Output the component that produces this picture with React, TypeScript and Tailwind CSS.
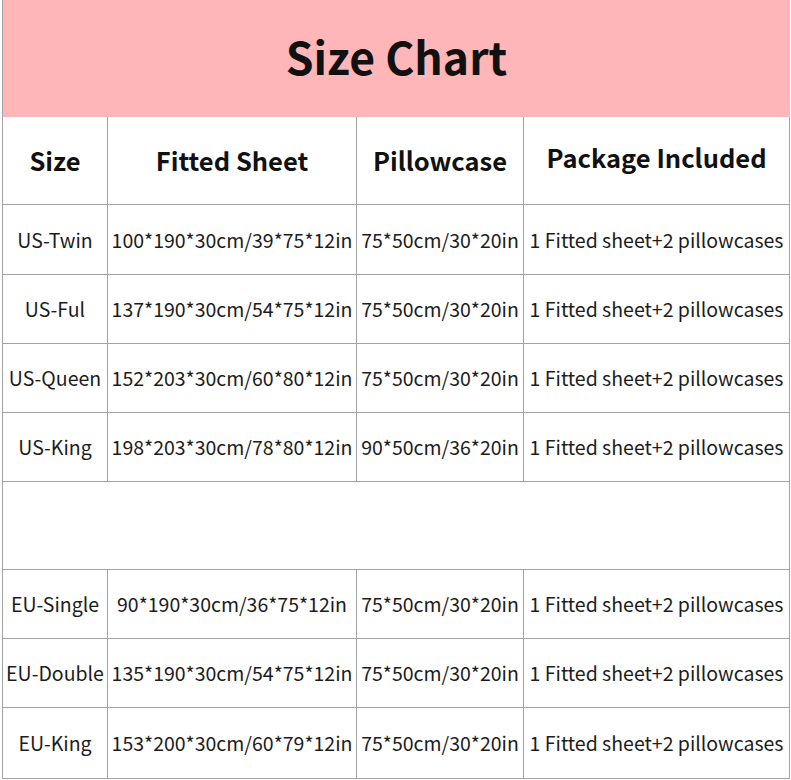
const ROWS: { size: string; fitted: string; pillow: string }[] = [
  { size: 'US-Twin', fitted: '100*190*30cm/39*75*12in', pillow: '75*50cm/30*20in' },
  { size: 'US-Ful', fitted: '137*190*30cm/54*75*12in', pillow: '75*50cm/30*20in' },
  { size: 'US-Queen', fitted: '152*203*30cm/60*80*12in', pillow: '75*50cm/30*20in' },
  { size: 'US-King', fitted: '198*203*30cm/78*80*12in', pillow: '90*50cm/36*20in' },
];

const EU_ROWS: { size: string; fitted: string; pillow: string }[] = [
  { size: 'EU-Single', fitted: '90*190*30cm/36*75*12in', pillow: '75*50cm/30*20in' },
  { size: 'EU-Double', fitted: '135*190*30cm/54*75*12in', pillow: '75*50cm/30*20in' },
  { size: 'EU-King', fitted: '153*200*30cm/60*79*12in', pillow: '75*50cm/30*20in' },
];

const PACKAGE = '1 Fitted sheet+2 pillowcases';

function Row({ size, fitted, pillow, h }: { size: string; fitted: string; pillow: string; h: string }) {
  return (
    <div className={`grid grid-cols-[105px_249px_167px_266px] border-b border-[#a3a3a3] text-[19.5px] text-[#1c1c1c] ${h}`}>
      <div className="flex items-center justify-center border-r border-[#a3a3a3] whitespace-nowrap">{size}</div>
      <div className="flex items-center justify-center border-r border-[#a3a3a3] whitespace-nowrap">{fitted}</div>
      <div className="flex items-center justify-center border-r border-[#a3a3a3] whitespace-nowrap">{pillow}</div>
      <div className="flex items-center justify-center border-r border-[#a3a3a3] whitespace-nowrap">{PACKAGE}</div>
    </div>
  );
}

export default function App() {
  return (
    <div
      className="w-[791px] h-[780px] bg-white pl-[2px]"
      style={{ fontFamily: '"Noto Sans CJK SC", "Noto Sans", sans-serif' }}
    >
      <div className="w-[788px] border-l border-[#a3a3a3]">
        <div className="h-[117px] bg-[#ffb6b8] flex items-center justify-center">
          <h1 className="text-[44.5px] font-bold text-[#111] leading-none -mt-[4px]">Size Chart</h1>
        </div>

        <div className="grid grid-cols-[105px_249px_167px_266px] h-[88px] border-b border-[#a3a3a3] text-[25.5px] font-bold text-[#111]">
          <div className="flex items-center justify-center border-r border-[#a3a3a3]">Size</div>
          <div className="flex items-center justify-center border-r border-[#a3a3a3]">Fitted Sheet</div>
          <div className="flex items-center justify-center border-r border-[#a3a3a3]">Pillowcase</div>
          <div className="flex items-center justify-center border-r border-[#a3a3a3] pb-[6px]">Package Included</div>
        </div>

        {ROWS.map((r, i) => (
          <Row key={r.size} {...r} h={i === 0 ? 'h-[70px]' : 'h-[69px]'} />
        ))}

        <div className="h-[88px] border-b border-r border-[#a3a3a3]" />

        {EU_ROWS.map((r, i) => (
          <Row key={r.size} {...r} h={i === 2 ? 'h-[71px]' : 'h-[69px]'} />
        ))}
      </div>
    </div>
  );
}
